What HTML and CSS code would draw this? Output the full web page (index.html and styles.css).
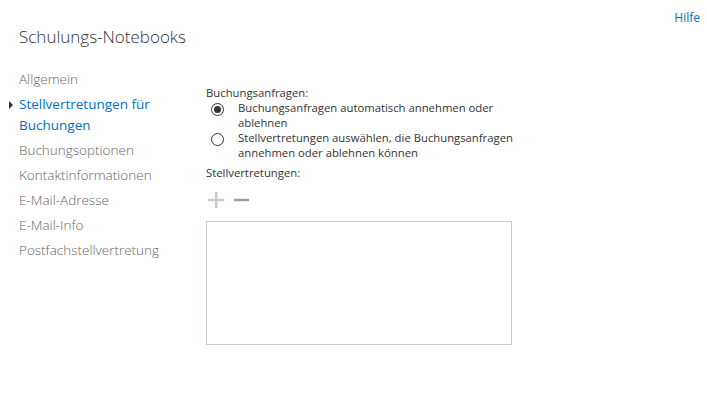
FILE: index.html
```html
<!DOCTYPE html>
<html lang="de">
<head>
<meta charset="utf-8">
<title>Schulungs-Notebooks</title>
<link rel="stylesheet" href="styles.css">
</head>
<body>
<div class="topbar"><a class="help" href="#">Hilfe</a></div>
<h1 class="title">Schulungs-Notebooks</h1>
<div class="main">
  <nav class="nav">
    <a class="nav-item" href="#">Allgemein</a>
    <a class="nav-item selected" href="#">Stellvertretungen für Buchungen</a>
    <a class="nav-item" href="#">Buchungsoptionen</a>
    <a class="nav-item" href="#">Kontaktinformationen</a>
    <a class="nav-item" href="#">E-Mail-Adresse</a>
    <a class="nav-item" href="#">E-Mail-Info</a>
    <a class="nav-item" href="#">Postfachstellvertretung</a>
  </nav>
  <section class="content">
    <div class="label">Buchungsanfragen:</div>
    <label class="radio-row">
      <span class="radio checked"></span>
      <span class="radio-text">Buchungsanfragen automatisch annehmen oder ablehnen</span>
    </label>
    <label class="radio-row">
      <span class="radio"></span>
      <span class="radio-text">Stellvertretungen auswählen, die Buchungsanfragen annehmen oder ablehnen können</span>
    </label>
    <div class="label label-gap">Stellvertretungen:</div>
    <div class="tools">
      <svg class="tool" width="16" height="16" viewBox="0 0 16 16"><rect x="7" y="0" width="2.4" height="16" fill="#c8c8c8"/><rect x="0" y="6.8" width="16" height="2.4" fill="#c8c8c8"/></svg>
      <svg class="tool" width="16" height="16" viewBox="0 0 16 16"><rect x="0" y="6.8" width="15" height="2.4" fill="#98a2a4"/></svg>
    </div>
    <div class="listbox"></div>
  </section>
</div>
</body>
</html>
```
FILE: styles.css
```css
html, body {
  margin: 0;
  padding: 0;
  background: #ffffff;
}
body {
  font-family: "Open Sans", "Noto Sans", "Liberation Sans", sans-serif;
  color: #333333;
}
.topbar {
  display: flex;
  justify-content: flex-end;
  padding: 10px 7px 0 0;
  height: 16px;
}
.help {
  font-size: 12px;
  line-height: 16px;
  color: #0072c6;
  text-decoration: none;
}
.title {
  margin: 0 0 0 19px;
  font-size: 17px;
  line-height: 21px;
  font-weight: 300;
  color: #333333;
}
.main {
  display: flex;
  margin-top: 22px;
}
.nav {
  width: 206px;
  padding-left: 19px;
  box-sizing: border-box;
  display: flex;
  flex-direction: column;
  gap: 4px;
}
.nav-item {
  font-size: 13.5px;
  line-height: 21px;
  color: #666666;
  text-decoration: none;
  font-weight: 300;
  position: relative;
}
.nav-item.selected {
  color: #0072c6;
  font-weight: 400;
}
.nav-item.selected::before {
  content: "";
  position: absolute;
  left: -10px;
  top: 7px;
  border-left: 4px solid #333333;
  border-top: 4px solid transparent;
  border-bottom: 4px solid transparent;
}
.content {
  padding-top: 16px;
  width: 318px;
  font-size: 11.3px;
  line-height: 15px;
  color: #333333;
}
.radio-row {
  display: flex;
  align-items: flex-start;
}
.radio {
  width: 13px;
  height: 13px;
  box-sizing: border-box;
  border: 1px solid #333333;
  border-radius: 50%;
  margin: 3px 14px 0 5px;
  flex-shrink: 0;
  position: relative;
}
.radio.checked::after {
  content: "";
  position: absolute;
  left: 2px;
  top: 2px;
  width: 7px;
  height: 7px;
  border-radius: 50%;
  background: #333333;
}
.radio-text {
  flex: 1;
}
.label-gap {
  margin-top: 5px;
}
.tools {
  display: flex;
  gap: 10px;
  margin: 12px 0 0 2px;
  height: 16px;
}
.listbox {
  margin-top: 13px;
  width: 306px;
  height: 124px;
  box-sizing: border-box;
  border: 1px solid #c6cdd0;
}
```
